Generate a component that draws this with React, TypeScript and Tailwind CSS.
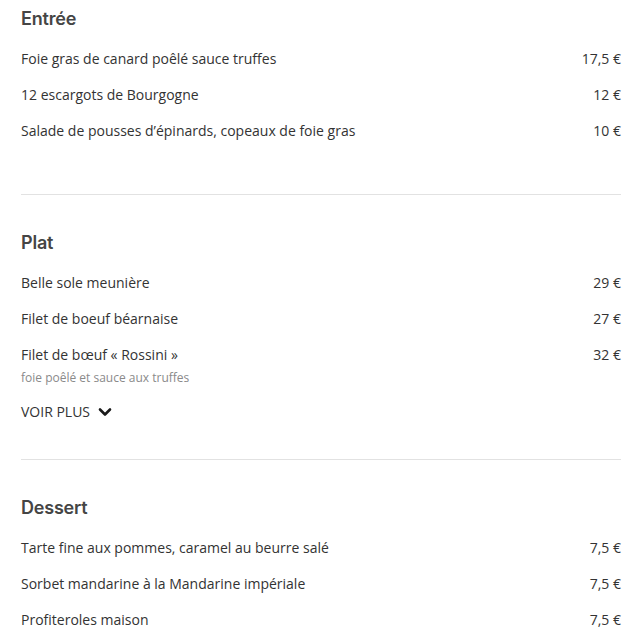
import React from "react";

type Item = { name: string; price: string; note?: string };

const sections: { title: string; items: Item[]; more?: boolean }[] = [
  {
    title: "Entrée",
    items: [
      { name: "Foie gras de canard poêlé sauce truffes", price: "17,5 €" },
      { name: "12 escargots de Bourgogne", price: "12 €" },
      { name: "Salade de pousses d’épinards, copeaux de foie gras", price: "10 €" },
    ],
  },
  {
    title: "Plat",
    items: [
      { name: "Belle sole meunière", price: "29 €" },
      { name: "Filet de boeuf béarnaise", price: "27 €" },
      { name: "Filet de bœuf « Rossini »", price: "32 €", note: "foie poêlé et sauce aux truffes" },
    ],
    more: true,
  },
  {
    title: "Dessert",
    items: [
      { name: "Tarte fine aux pommes, caramel au beurre salé", price: "7,5 €" },
      { name: "Sorbet mandarine à la Mandarine impériale", price: "7,5 €" },
      { name: "Profiteroles maison", price: "7,5 €" },
    ],
  },
];

function Chevron() {
  return (
    <svg width="14" height="10" viewBox="0 0 14 10" fill="none" stroke="#1a1a1a" strokeWidth="2.6" strokeLinecap="round" strokeLinejoin="round">
      <path d="M2 2.5l5 5 5-5" />
    </svg>
  );
}

export default function App() {
  return (
    <div className="w-[644px] h-[642px] overflow-hidden bg-white px-[21px] pt-[7px] text-[#333] font-['Open_Sans',sans-serif]">
      <div className="w-[600px]">
        {sections.map((s, i) => (
          <div key={s.title}>
            {i > 0 && <div className="h-px bg-[#e2e2e2] mt-[45px] mb-[36px]" />}
            <h2 className="text-[18px] leading-[24px] font-semibold text-[#454545] font-['Inter',sans-serif] tracking-[-0.2px] mb-[10px]">
              {s.title}
            </h2>
            {s.items.map((it) => (
              <div key={it.name} className="py-2">
                <div className="flex justify-between text-[14px] leading-[20px]">
                  <span>{it.name}</span>
                  <span>{it.price}</span>
                </div>
                {it.note && (
                  <div className="text-[12px] leading-[18px] mt-[4px] text-[#8a8a8a]">{it.note}</div>
                )}
              </div>
            ))}
            {s.more && (
              <div className="flex items-center gap-[8px] text-[14px] leading-[20px] mt-[7px] -mb-[8px]">
                <span>VOIR PLUS</span>
                <Chevron />
              </div>
            )}
          </div>
        ))}
      </div>
    </div>
  );
}
